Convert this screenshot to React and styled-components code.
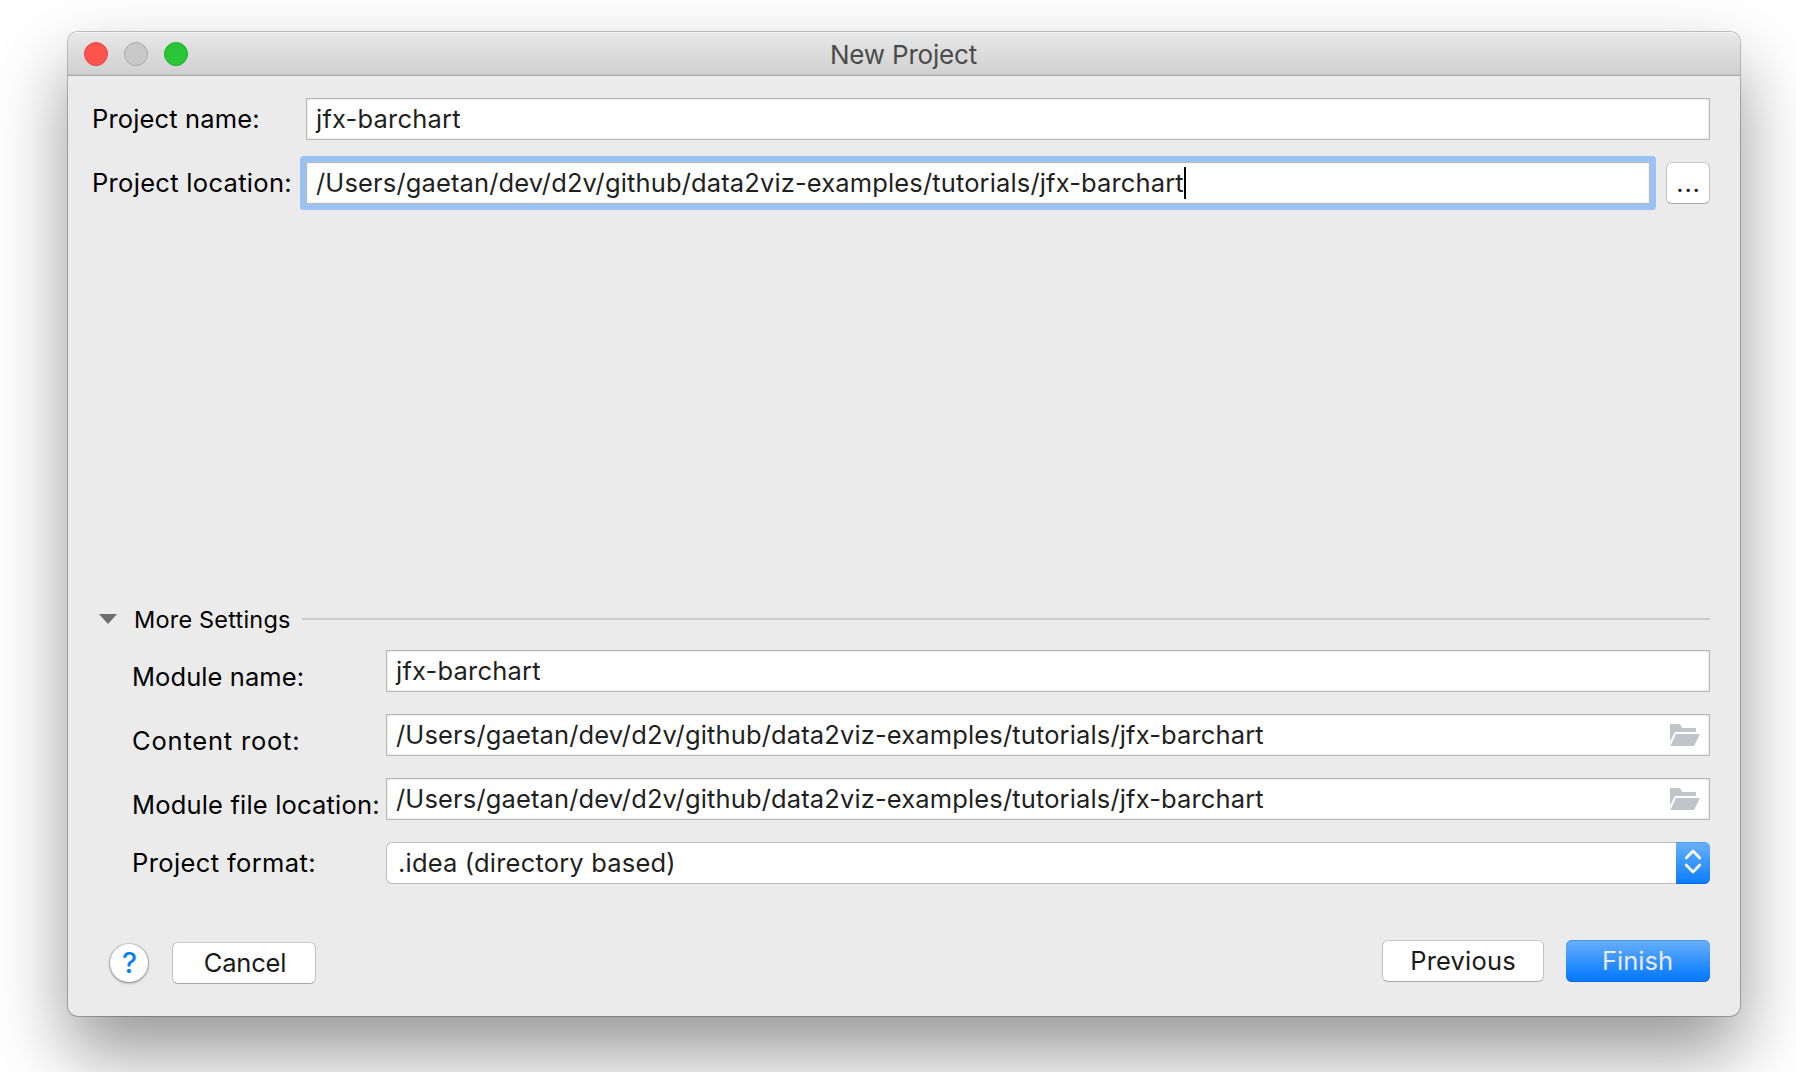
import React from "react";
import styled, { createGlobalStyle, css } from "styled-components";

const GlobalStyle = createGlobalStyle`
  *, *::before, *::after { box-sizing: border-box; }
  html, body { margin: 0; background: #fff; }
  body {
    font-family: Inter, "Liberation Sans", sans-serif;
    font-size: 25.5px;
    color: #000;
    overflow: hidden;
  }
`;

const Desktop = styled.div`
  height: 1072px;
  padding: 32px 56px 56px 68px;
`;

const Window = styled.main`
  display: flex;
  flex-direction: column;
  width: 1672px;
  height: 984px;
  border-radius: 10px;
  background: #ebebeb;
  box-shadow: 0 0 0 1px rgba(0, 0, 0, 0.23), 0 36px 72px rgba(0, 0, 0, 0.42);
`;

const TitleBar = styled.header`
  display: grid;
  grid-template-columns: 1fr auto 1fr;
  align-items: center;
  height: 44px;
  padding: 0 16px;
  border-radius: 10px 10px 0 0;
  border-bottom: 1px solid #a8a8a8;
  background: linear-gradient(#e8e8e8, #d0d0d0);
  box-shadow: inset 0 1px 0 #f5f5f5, inset 0 -1px 0 #c6c6c6;
`;

const Lights = styled.div`
  display: flex;
  gap: 16px;
`;

const Light = styled.span`
  width: 24px;
  height: 24px;
  border-radius: 50%;
  background: ${(p) => p.$fill};
  border: 1px solid ${(p) => p.$edge};
`;

const Title = styled.h1`
  margin: 0;
  padding: 2px 1px 0 0;
  font-size: 26px;
  font-weight: 400;
  line-height: 42px;
  letter-spacing: -0.2px;
  color: #4b4b4b;
`;

const Content = styled.div`
  flex: 1;
  display: flex;
  flex-direction: column;
  padding: 22px 30px 32px 24px;
`;

const Label = styled.label`
  line-height: 42px;
  white-space: pre;
  letter-spacing: ${(p) => p.$track}px;
  padding-top: ${(p) => p.$drop || 0}px;
`;

const ProjectForm = styled.form`
  display: grid;
  grid-template-columns: 214px 1fr;
  grid-auto-rows: 42px;
  row-gap: 22px;
`;

const LocationGroup = styled.div`
  display: flex;
  gap: 16px;
`;

const Field = styled.div`
  flex: 1;
  display: flex;
  align-items: center;
  height: 42px;
  padding: 0 9px;
  border: 1px solid #b9b9b9;
  background: #fff;
  color: #1f1f1f;
  line-height: 40px;
  letter-spacing: ${(p) => p.$track || 0.138}px;
  white-space: pre;
  box-shadow: inset 0 0 0 1px #ececec;
  ${(p) =>
    p.$focused &&
    css`
      border-color: #bdb9b4;
      border-radius: 1px;
      box-shadow: inset 0 0 0 1px #f3f3f3, 0 0 0 6px #9ac3f4;
    `}
`;

const Caret = styled.span`
  width: 2px;
  height: 32px;
  background: #000;
`;

const buttonFace = css`
  border: 1px solid #c0c0c0;
  border-top-color: #c9c9c9;
  border-bottom-color: #a9a9a9;
  border-radius: 6px;
  background: #fff;
`;

const BrowseButton = styled.button`
  ${buttonFace}
  width: 44px;
  height: 42px;
  padding: 0 0 0 1px;
  font: inherit;
  line-height: 40px;
  letter-spacing: 0.8px;
  color: #1a1a1a;
`;

const MoreSettings = styled.div`
  display: flex;
  align-items: center;
  height: 30px;
  margin-top: auto;
  padding-left: 7px;
`;

const SectionTitle = styled.h2`
  margin: 0 12px 0 17px;
  padding-top: 2px;
  width: 156px;
  font-size: 23.5px;
  font-weight: 400;
  line-height: 28px;
  letter-spacing: 0.2px;
  white-space: pre;
`;

const Rule = styled.div`
  flex: 1;
  height: 2px;
  background: #cdcdcd;
`;

const SettingsForm = styled.form`
  display: grid;
  grid-template-columns: 254px 1fr;
  grid-auto-rows: 42px;
  row-gap: 22px;
  margin: 16px 0 56px;
  padding-left: 40px;
`;

const FieldText = styled.span`
  flex: 1;
`;

const Combo = styled.div`
  display: flex;
  height: 42px;
  border-radius: 6px;
  background: #fff;
`;

const ComboText = styled.span`
  flex: 1;
  padding-left: 11px;
  border: 1px solid #bcbcbc;
  border-right: 0;
  border-radius: 6px 0 0 6px;
  line-height: 40px;
  letter-spacing: 0.188px;
  color: #1f1f1f;
`;

const ComboArrows = styled.span`
  display: flex;
  align-items: flex-start;
  justify-content: center;
  width: 34px;
  padding: 7px 1px 0 0;
  border-radius: 0 6px 6px 0;
  background: linear-gradient(#6ab1fa, #097cff);
  box-shadow: inset 0 1px 0 #4a9ef7, inset 0 -1px 0 #0a68e8;
`;

const Footer = styled.footer`
  display: flex;
  align-items: flex-start;
`;

const HelpButton = styled.button`
  width: 38px;
  height: 38px;
  margin: 4px 24px 0 18px;
  padding: 0 0 0 1px;
  border: 0;
  border-radius: 50%;
  background: #fff;
  box-shadow: 0 0 0 1px rgba(0, 0, 0, 0.12), 0 1px 2px 1px rgba(0, 0, 0, 0.22);
  color: #087cff;
  font: 500 28.5px/38px Inter, "Liberation Sans", sans-serif;
`;

const Button = styled.button`
  ${buttonFace}
  width: ${(p) => p.$width}px;
  height: 42px;
  padding: 0 0 0 ${(p) => p.$nudge || 0}px;
  margin-top: ${(p) => p.$drop || 0}px;
  margin-left: ${(p) => p.$before || 0};
  font: inherit;
  line-height: 40px;
  letter-spacing: ${(p) => p.$track}px;
  color: #1a1a1a;
  ${(p) =>
    p.$primary &&
    css`
      border: 0;
      padding-right: 1px;
      background: linear-gradient(#69b0fa, #1180ff 82%, #097aff);
      box-shadow: inset 0 1px 0 #4497f2, inset 0 -1px 0 #0668f0;
      line-height: 42px;
      color: #ebebf5;
    `}
`;

const Folder = () => (
  <svg width="30" height="22" viewBox="0 0 30 22" fill="#c0c5c9">
    <path d="M0 0H10L12 4H26V8H5L0 17.5Z" />
    <path d="M6 10H30L24 22H0.3Z" />
  </svg>
);

const PATH = "/Users/gaetan/dev/d2v/github/data2viz-examples/tutorials/jfx-barchart";

export default function App() {
  return (
    <Desktop>
      <GlobalStyle />
      <Window>
        <TitleBar>
          <Lights>
            <Light $fill="#ff544d" $edge="#e0443e" />
            <Light $fill="#c9c9c9" $edge="#aaaaaa" />
            <Light $fill="#27c738" $edge="#1aab29" />
          </Lights>
          <Title>New Project</Title>
        </TitleBar>
        <Content>
          <ProjectForm>
            <Label $track={0.153}>Project name:</Label>
            <Field $track={0.2}>
              <FieldText>jfx-barchart</FieldText>
            </Field>
            <Label $track={0.309}>Project location:</Label>
            <LocationGroup>
              <Field $focused>
                {PATH}
                <Caret />
              </Field>
              <BrowseButton type="button">...</BrowseButton>
            </LocationGroup>
          </ProjectForm>

          <MoreSettings>
            <svg width="18" height="10" viewBox="0 0 18 10">
              <path d="M0 0H18L9 10Z" fill="#6e6e6e" />
            </svg>
            <SectionTitle>More Settings</SectionTitle>
            <Rule />
          </MoreSettings>

          <SettingsForm>
            <Label $track={0.08} $drop={6}>Module name:</Label>
            <Field $track={0.2}>
              <FieldText>jfx-barchart</FieldText>
            </Field>
            <Label $track={0.8} $drop={6}>Content root:</Label>
            <Field>
              <FieldText>{PATH}</FieldText>
              <Folder />
            </Field>
            <Label $track={0.18} $drop={6}>Module file location:</Label>
            <Field>
              <FieldText>{PATH}</FieldText>
              <Folder />
            </Field>
            <Label $track={0.38}>Project format:</Label>
            <Combo>
              <ComboText>.idea (directory based)</ComboText>
              <ComboArrows>
                <svg
                  width="18"
                  height="26"
                  viewBox="0 0 18 26"
                  fill="none"
                  stroke="#fff"
                  strokeWidth="2.6"
                  strokeLinecap="round"
                  strokeLinejoin="round"
                >
                  <path d="M2.2 9L9 2L15.8 9M2.2 16L9 23L15.8 16" />
                </svg>
              </ComboArrows>
            </Combo>
          </SettingsForm>

          <Footer>
            <HelpButton type="button">?</HelpButton>
            <Button type="button" $width={144} $drop={2} $nudge={2} $track={-0.169}>
              Cancel
            </Button>
            <Button type="button" $width={162} $before="auto" $track={0.185}>
              Previous
            </Button>
            <Button type="button" $width={144} $before="22px" $primary $track={0.014}>
              Finish
            </Button>
          </Footer>
        </Content>
      </Window>
    </Desktop>
  );
}
